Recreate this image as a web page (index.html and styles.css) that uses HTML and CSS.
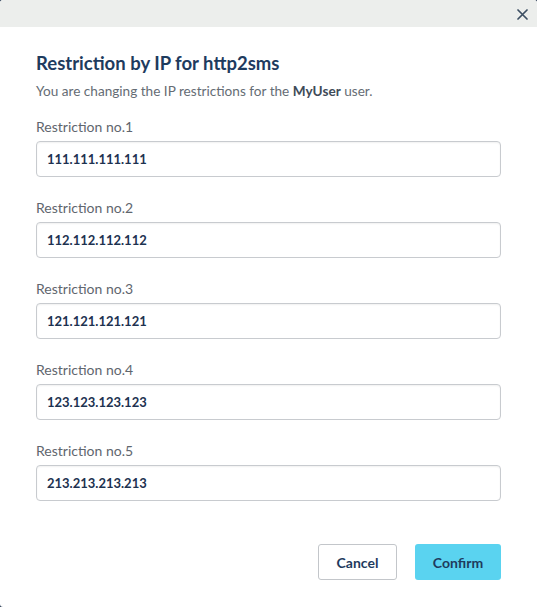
FILE: index.html
```html
<!DOCTYPE html>
<html>
<head>
<meta charset="utf-8">
<link rel="stylesheet" href="styles.css">
</head>
<body>
<div class="dialog">
  <div class="dialog-header">
    <button class="close" aria-label="Close">
      <svg width="11" height="11" viewBox="0 0 11 11"><path d="M1 1L10 10M10 1L1 10" stroke="#3d4f63" stroke-width="1.7" stroke-linecap="round"/></svg>
    </button>
  </div>
  <div class="dialog-body">
    <h1 class="title">Restriction by IP for http2sms</h1>
    <p class="subtitle">You are changing the IP restrictions for the <strong>MyUser</strong> user.</p>
    <div class="fields">
      <label class="field"><span class="label">Restriction no.1</span><input class="input" type="text" value="111.111.111.111"></label>
      <label class="field"><span class="label">Restriction no.2</span><input class="input" type="text" value="112.112.112.112"></label>
      <label class="field"><span class="label">Restriction no.3</span><input class="input" type="text" value="121.121.121.121"></label>
      <label class="field"><span class="label">Restriction no.4</span><input class="input" type="text" value="123.123.123.123"></label>
      <label class="field"><span class="label">Restriction no.5</span><input class="input" type="text" value="213.213.213.213"></label>
    </div>
    <div class="actions">
      <button class="btn btn-secondary">Cancel</button>
      <button class="btn btn-primary">Confirm</button>
    </div>
  </div>
</div>
</body>
</html>
```
FILE: styles.css
```css
* { box-sizing: border-box; }
html, body { margin: 0; padding: 0; }
body {
  width: 537px;
  height: 607px;
  background: #2c3e57;
  font-family: Lato, "Open Sans", sans-serif;
  overflow: hidden;
}
.dialog {
  width: 537px;
  height: 607px;
  background: #ffffff;
  border-radius: 3px 3px 0 3px;
  overflow: hidden;
  display: flex;
  flex-direction: column;
}
.dialog-header {
  height: 27px;
  background: #eceeec;
  display: flex;
  justify-content: flex-end;
  align-items: center;
  padding-right: 9px;
}
.close {
  border: 0;
  background: none;
  padding: 0;
  width: 11px;
  height: 11px;
  display: flex;
  align-items: center;
  justify-content: center;
  margin-top: 2px;
}
.dialog-body {
  padding: 24px 36px 0 36px;
  display: flex;
  flex-direction: column;
}
.title {
  margin: 0;
  font-size: 18.5px;
  line-height: 24px;
  font-weight: 700;
  color: #1e3b5e;
}
.subtitle {
  margin: 6px 0 0 0;
  font-size: 13.6px;
  line-height: 20px;
  color: #656c74;
}
.subtitle strong { color: #3e4b58; }
.fields {
  margin-top: 16px;
  display: flex;
  flex-direction: column;
  gap: 21px;
}
.field {
  display: flex;
  flex-direction: column;
  gap: 4px;
}
.label {
  font-size: 14px;
  line-height: 20px;
  color: #5f666e;
}
.input {
  height: 36px;
  width: 465px;
  border: 1px solid #c8cbcf;
  border-radius: 4px;
  padding: 0 10px;
  font-family: inherit;
  font-size: 13px;
  font-weight: 700;
  color: #1d3250;
  box-shadow: inset 0 1px 2px rgba(0,0,0,0.06);
  outline: none;
}
.actions {
  margin-top: 43px;
  display: flex;
  justify-content: flex-end;
  gap: 18px;
}
.btn {
  height: 36px;
  border-radius: 3px;
  font-family: inherit;
  font-size: 14px;
  font-weight: 700;
  color: #1e3b5e;
  cursor: pointer;
}
.btn-secondary {
  width: 79px;
  background: #ffffff;
  border: 1px solid #c3c6ca;
}
.btn-primary {
  width: 86px;
  background: #5ad3f0;
  border: 0;
}
```
